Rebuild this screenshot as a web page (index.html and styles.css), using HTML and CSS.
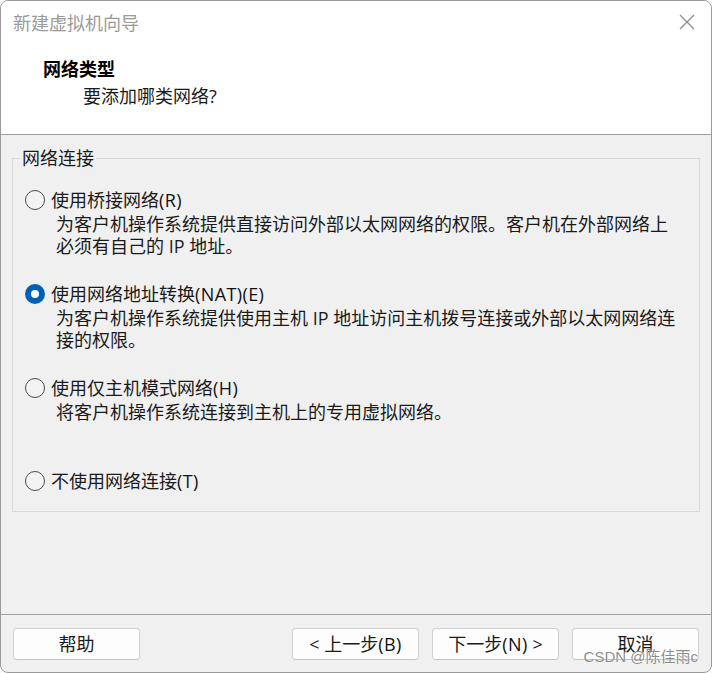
FILE: index.html
```html
<!DOCTYPE html>
<html lang="zh-CN">
<head>
<meta charset="utf-8">
<title>新建虚拟机向导</title>
<link rel="stylesheet" href="styles.css">
</head>
<body>
<div class="window">
  <div class="header">
    <div class="titlebar">
      <span class="title">新建虚拟机向导</span>
      <svg class="close" width="16" height="16" viewBox="0 0 16 16"><path d="M1 1 L15 15 M15 1 L1 15" stroke="#8a8a8a" stroke-width="1.2" fill="none"/></svg>
    </div>
    <div class="header-body">
      <div class="h-title">网络类型</div>
      <div class="h-sub">要添加哪类网络?</div>
    </div>
  </div>
  <div class="content">
    <fieldset class="group">
      <legend>网络连接</legend>
      <div class="option">
        <div class="opt-row"><span class="radio"></span><span>使用桥接网络<span class="lat">(R)</span></span></div>
        <div class="desc">为客户机操作系统提供直接访问外部以太网网络的权限。客户机在外部网络上<br>必须有自己的 IP 地址。</div>
      </div>
      <div class="option gap">
        <div class="opt-row"><span class="radio checked"></span><span>使用网络地址转换<span class="lat">(NAT)(E)</span></span></div>
        <div class="desc">为客户机操作系统提供使用主机 IP 地址访问主机拨号连接或外部以太网网络连<br>接的权限。</div>
      </div>
      <div class="option gap">
        <div class="opt-row"><span class="radio"></span><span>使用仅主机模式网络<span class="lat">(H)</span></span></div>
        <div class="desc">将客户机操作系统连接到主机上的专用虚拟网络。</div>
      </div>
      <div class="option gap-large">
        <div class="opt-row"><span class="radio"></span><span>不使用网络连接<span class="lat">(T)</span></span></div>
      </div>
    </fieldset>
  </div>
  <div class="footer">
    <button class="btn">帮助</button>
    <div class="btn-group">
      <button class="btn">&lt; 上一步<span class="lat">(B)</span></button>
      <button class="btn">下一步<span class="lat">(N)</span> &gt;</button>
      <button class="btn">取消</button>
    </div>
  </div>
  <div class="watermark">CSDN @陈佳雨c</div>
</div>
</body>
</html>
```

FILE: styles.css
```css
* { box-sizing: border-box; }

html, body {
  margin: 0;
  padding: 0;
  background: #ffffff;
}

body {
  font-family: "Open Sans", "Noto Sans CJK SC", sans-serif;
  font-size: 18px;
  color: #1a1a1a;
}

.window {
  position: relative;
  width: 712px;
  height: 673px;
  border: 1px solid #9a9a9a;
  border-radius: 8px;
  overflow: hidden;
  display: flex;
  flex-direction: column;
  background: #f0f0f0;
}

.header {
  background: #ffffff;
  border-bottom: 1px solid #a0a0a0;
}

.titlebar {
  height: 43px;
  display: flex;
  align-items: center;
  justify-content: space-between;
  padding: 0 16px 0 12px;
}

.title {
  color: #9a9a9a;
  font-size: 18px;
  line-height: 24px;
}

.close {
  display: block;
  margin-top: -1px;
}

.header-body {
  height: 90px;
  padding: 13px 0 0 42px;
}

.h-title {
  font-weight: bold;
  line-height: 24px;
  color: #000;
}

.h-sub {
  margin: 3px 0 0 40px;
  line-height: 24px;
}

.content {
  flex: 1;
}

.group {
  margin: 11px 11px 0;
  padding: 18px 0 18px 0;
  border: 1px solid #d9d9d9;
  min-width: 0;
}

.group legend {
  margin-left: 7px;
  padding: 0 2px;
  line-height: 24px;
  font-size: 18px;
}

.option {
  padding-left: 12px;
}

.option.gap { margin-top: 25px; }
.option.gap-large { margin-top: 46px; }

.opt-row {
  display: flex;
  align-items: center;
  line-height: 24px;
  height: 24px;
  white-space: nowrap;
}

.lat {
  font-weight: 500;
  letter-spacing: 0.4px;
  color: #111;
}

.radio {
  width: 20px;
  height: 20px;
  border: 1.3px solid #4a4a4a;
  border-radius: 50%;
  margin-right: 6px;
  background: #f3f3f3;
  flex: none;
}

.radio.checked {
  border: 6px solid #005fb8;
  background: #ffffff;
}

.desc {
  margin: 1px 0 0 31px;
  line-height: 22px;
  white-space: nowrap;
}

.footer {
  border-top: 1px solid #a0a0a0;
  padding: 13px 12px 12px 12px;
  display: flex;
  justify-content: space-between;
}

.btn-group {
  display: flex;
  gap: 13px;
}

.btn {
  width: 127px;
  height: 32px;
  background: #fdfdfd;
  border: 1px solid #d0d0d0;
  border-bottom-color: #c2c2c2;
  border-radius: 4px;
  font-family: "Open Sans", "Noto Sans CJK SC", sans-serif;
  font-size: 18px;
  color: #1a1a1a;
  padding: 0;
  line-height: 28px;
}

.watermark {
  position: absolute;
  right: 13px;
  top: 645px;
  font-family: "Liberation Sans", "Noto Sans CJK SC", sans-serif;
  font-size: 15px;
  line-height: 22px;
  color: rgba(120, 120, 120, 0.85);
  text-shadow: 0 0 1px rgba(255, 255, 255, 0.8);
  white-space: nowrap;
}
```
